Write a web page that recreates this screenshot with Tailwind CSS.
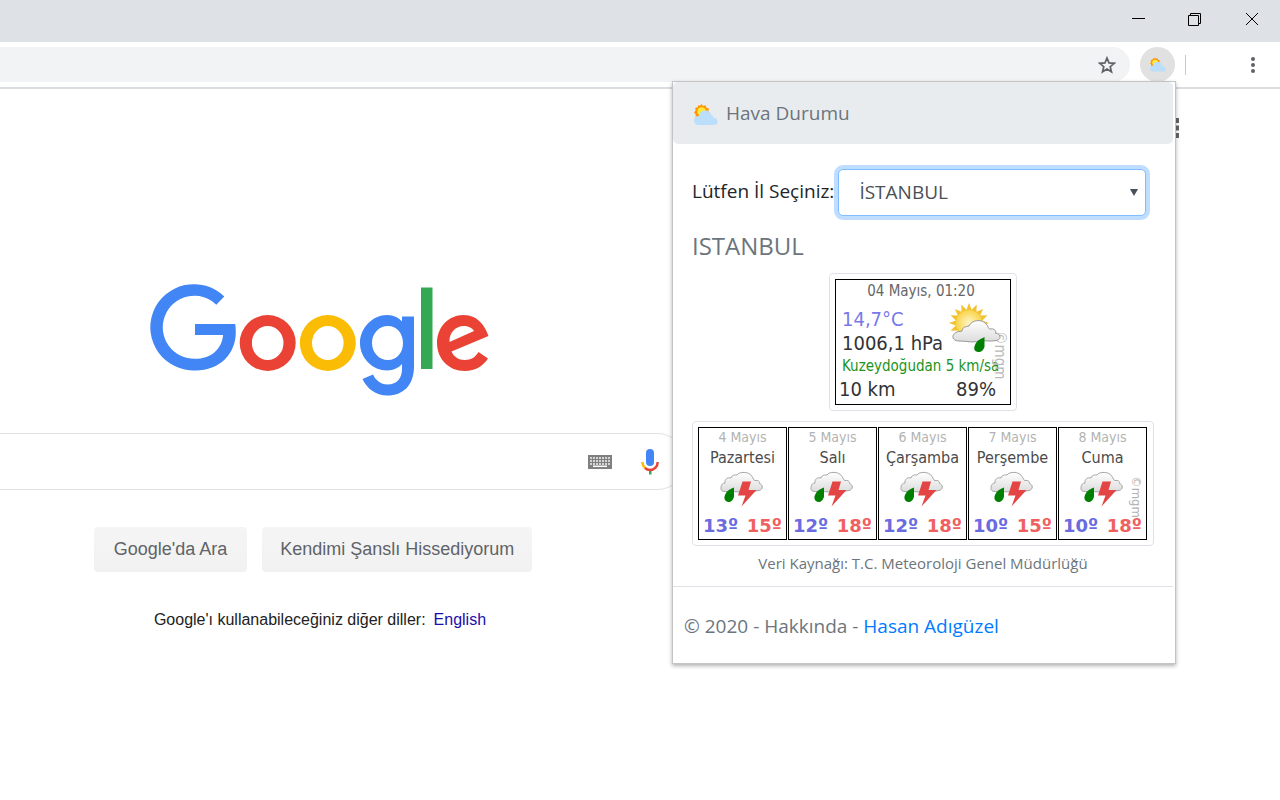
<!DOCTYPE html>
<html lang="tr">
<head>
<meta charset="utf-8">
<title>Hava Durumu</title>
<script src="https://cdn.jsdelivr.net/npm/@tailwindcss/browser@4"></script>
</head>
<body class="flex min-h-screen flex-col bg-white font-['Liberation_Sans',sans-serif] text-base text-[#222]">

<svg class="absolute size-0" aria-hidden="true">
  <defs>
    <linearGradient id="cloudFill" x1="0" y1="0" x2="0" y2="1"><stop offset="0" stop-color="#fff"/><stop offset="1" stop-color="#dcdcdc"/></linearGradient>
    <radialGradient id="sunFill"><stop offset="0" stop-color="#fff6c8"/><stop offset="1" stop-color="#f9d44c"/></radialGradient>
  </defs>
  <symbol id="partly" viewBox="0 0 24 21">
    <path fill="#ff9800" d="M7.500 0L9.200 2L11.700 1.300L12.400 3.800L15 4.400L14.300 6.900L15.500 8.500L12 14L5 14L1.500 12.500L1.700 10.500L0 8.500L1.700 6.300L1.100 3.900L3.600 3.300L4.600 1L6 1.800Z"/>
    <circle cx="7.700" cy="7.600" r="4.300" fill="#ffeb3b"/>
    <path fill="#bbdefb" d="M4.500 21a4.500 4.500 0 0 1 0-9h.5a6.300 6.300 0 0 1 12.300-1a4.500 4.500 0 0 1 2.700 3a3.500 3.500 0 0 1 0 7z"/>
  </symbol>
  <symbol id="storm" viewBox="0 0 44 36">
    <path fill="url(#cloudFill)" stroke="#a5a5a5" d="M7 20.500C2 21 .500 19 1 16.500C1 13.500 3 12 5 12C4.500 8 7.500 6 11 7C12 3.500 15 4 17 4C19 .500 29 0 32 5.500C34 8 33.500 9.500 35 9.500C38 9 40 10.500 39.500 12.500C43 13.500 43.500 18.500 39 19.500C33 21.500 27 19 22 20.500C17 21.500 12 20 7 20.500Z"/>
    <path fill="#008000" d="M14 16.500V25.500C13 29.500 11 31 8.500 31C5 31 3.500 27 5 24C6.500 20 10 18 14 16.500Z"/>
    <path fill="#e34444" d="M22.500 10.500H31L28.500 19H36.500L21.500 35.500L25.500 24.500H18Z"/>
  </symbol>
</svg>

<header>
  <div class="flex h-[42px] justify-end bg-[#dee1e6] text-black">
    <button class="grid w-14 place-items-center pb-1" aria-label="Simge durumuna küçült"><svg class="size-3.5" viewBox="0 0 14 14"><path d="M1 6.500h13" stroke="currentColor" shape-rendering="crispEdges"/></svg></button>
    <button class="grid w-14 place-items-center pb-1" aria-label="Önceki boyut"><svg class="size-3.5" viewBox="0 0 14 14" fill="none" stroke="currentColor"><path d="M1.500 3.500h10v10h-10zM3.500 3.500v-2h10v10h-2"/></svg></button>
    <button class="ml-0.5 grid w-14 place-items-center pb-1" aria-label="Kapat"><svg class="size-3.5" viewBox="0 0 14 14"><path d="M1 1l12 12M13 1L1 13" stroke="currentColor"/></svg></button>
  </div>
  <div class="flex h-[47px] items-center border-b-2 border-[#dadce0] pr-6">
    <div class="flex h-[35px] flex-1 items-center justify-end rounded-r-full bg-[#f1f3f4] pr-3.5">
      <button aria-label="Yer işareti ekle"><svg class="size-[18px]" viewBox="0 0 18 18" fill="none" stroke="#5f6368" stroke-width="1.700"><path d="M9 2l2 4.900 5.200.4-4 3.400 1.300 5.100L9 13l-4.500 2.800 1.300-5.100-4-3.400L7 6.900z"/></svg></button>
    </div>
    <button class="ml-2.5 grid size-[35px] place-items-center rounded-full bg-[#e1e1e1]" aria-label="Hava Durumu eklentisi"><svg class="h-[15px] w-4"><use href="#partly"/></svg></button>
    <div class="ml-2.5 h-5 w-px bg-[#c8cacd]"></div>
    <button class="ml-16 grid h-6 w-1.5 place-items-center" aria-label="Menü"><svg class="h-4 w-1" viewBox="0 0 4 16" fill="#5f6368"><circle cx="2" cy="2" r="2"/><circle cx="2" cy="8" r="2"/><circle cx="2" cy="14" r="2"/></svg></button>
  </div>
</header>

<main class="relative flex-1">
  <button class="absolute top-[29px] right-[101px]" aria-label="Google uygulamaları"><svg class="size-5" viewBox="0 0 20 20" fill="#666"><path d="M0 0h5v5H0zM7.500 0h5v5h-5zM15 0h5v5h-5zM0 7.500h5v5H0zM7.500 7.500h5v5h-5zM15 7.500h5v5h-5zM0 15h5v5H0zM7.500 15h5v5h-5zM15 15h5v5h-5z"/></svg></button>

  <div class="flex w-1/2 flex-col items-center pt-[194px]">
    <svg class="h-[114px] w-[340px]" viewBox="150 283 340 114" fill="none" role="img" aria-label="Google">
      <path fill="#4285f4" d="M195 324h40.200q.6 4 .6 8c0 22-16 38.500-40.300 38.500a43.500 43.200 0 1 1 28.800-74l-8 8.300a31.500 31.500 0 1 0-21 54c15 0 26.500-9 27.800-23.800H195z"/>
      <path fill="#ea4335" fill-rule="evenodd" d="M267.700 315a28 28 0 1 1 0 56a28 28 0 1 1 0-56zm0 11a15.800 17 0 1 0 0 34a15.800 17 0 1 0 0-34z"/>
      <path fill="#fbbc05" fill-rule="evenodd" d="M327.800 315a28 28 0 1 1 0 56a28 28 0 1 1 0-56zm0 11a15.800 17 0 1 0 0 34a15.800 17 0 1 0 0-34z"/>
      <path fill="#4285f4" fill-rule="evenodd" d="M402 316.500h12v50c0 19-11 29-26.500 29c-12 0-20.500-7-25-16.500l10.500-4.500c2.500 5.500 7.500 10 14.500 10c10 0 14.500-6.500 14.500-16v-4.500c-3 3.500-8 6.500-15 6.500c-14 0-27-12-27-27.500s13-28 27-28c7 0 12 3 15 6.500zm-14 9.500c-9 0-16 7.500-16 17s7 17 16 17c8.500 0 15-7 15-17s-6.500-17-15-17z"/>
      <path fill="#34a853" d="M421 287.500h11.500V369H421z"/>
      <path fill="#ea4335" fill-rule="evenodd" d="M488.500 336l-37 15.500c2.500 5.500 7 8.500 13 8.500c7 0 11-3 14-8l9.500 6.500c-5 7.500-12 12.500-23.500 12.500c-15.500 0-27.500-12-27.500-28s11.500-28 26.500-28c15 0 22 12 25 21zm-14.500-5c-2-3.500-6-5-10.500-5c-7.500 0-14.500 6.500-14 16z"/>
    </svg>
    <form class="mt-9 -mr-[46px] flex h-[57px] items-center gap-7 self-stretch rounded-r-full border border-l-0 border-[#dfe1e5] pr-[25px]">
      <input class="h-full min-w-0 flex-1 outline-none" type="text" aria-label="Ara">
      <button type="button" aria-label="Giriş araçları"><svg class="h-3.5 w-6" viewBox="0 0 24 14"><path fill="#7f7f7f" d="M0 0h24v14H0z"/><path stroke="#d4d4d4" stroke-width="2" stroke-dasharray="2 1" d="M2 3h20M2 6h20M2 9h20"/><path stroke="#fff" stroke-width="1.500" d="M5 11.300h14"/></svg></button>
      <button type="button" aria-label="Sesle arama"><svg class="h-[26px] w-[20px]" viewBox="0 0 20 26" fill="none"><rect x="6" width="8" height="17" rx="4" fill="#4285f4"/><path fill="#34a853" d="M9 21h2.500v4.500H9z"/><path stroke="#fbbc05" stroke-width="2.500" d="M2.300 13q.2 3.500 2.700 6"/><path stroke="#ea4335" stroke-width="2.500" d="M5 19q2.200 2 5 2c4.500 0 7.600-3.500 7.700-8"/></svg></button>
    </form>
    <div class="mt-[37px] flex gap-[15px] pr-3.5 text-lg text-[#5f6368]">
      <button class="h-[45px] rounded bg-linear-to-b from-[#f5f5f5] to-[#f1f1f1] px-5 pb-0.5">Google'da Ara</button>
      <button class="h-[45px] rounded bg-linear-to-b from-[#f5f5f5] to-[#f1f1f1] px-[18px] pb-0.5">Kendimi Şanslı Hissediyorum</button>
    </div>
    <p class="mt-9 flex gap-2 text-base">Google'ı kullanabileceğiniz diğer diller: <a class="text-[#1a0dab]" href="#en">English</a></p>
  </div>
</main>

<section class="absolute top-[81px] right-[104px] w-[504px] border border-[#c4c4c4] bg-white font-['Open_Sans',sans-serif] text-[19px] text-[#6c757d] shadow-[0_2px_4px_rgb(0_0_0/0.3)]" aria-label="Hava Durumu">
  <h1 class="mr-0.5 flex h-[62px] items-center gap-2 rounded-[5px] bg-[#e9ecef] pl-[21px]"><svg class="mt-0.5 h-[21px] w-6"><use href="#partly"/></svg>Hava Durumu</h1>
  <div class="mr-0.5 border-b border-[#dee2e6] px-[19px] pt-[25px] pb-2.5">
    <div class="flex items-center gap-1 pr-2">
      <label for="city" class="pb-0.5 whitespace-nowrap text-[#212529]">Lütfen İl Seçiniz:</label>
      <div class="relative flex-1">
        <select id="city" class="h-[47px] w-full appearance-none rounded-[5px] border border-[#80bdff] bg-white px-5 text-[19px] text-[#495057] ring-4 ring-[#bfdeff] outline-none"><option>İSTANBUL</option></select>
        <svg class="pointer-events-none absolute top-5 right-2 h-[7px] w-2" viewBox="0 0 8 7" fill="#495057"><path d="M0 0h8L4 7z"/></svg>
      </div>
    </div>
    <h2 class="mt-3 text-2xl leading-9">ISTANBUL</h2>
    <div class="mx-auto mt-[9px] w-[188px] rounded border border-[#dee2e6] p-[5px]">
      <div class="relative h-[126px] overflow-hidden border border-black font-['DejaVu_Sans_Condensed','DejaVu_Sans',sans-serif] text-xl leading-6 whitespace-nowrap text-[#333]">
        <p class="pr-1 text-center text-[15px] leading-[22px] text-[#666]">04 Mayıs, 01:20</p>
        <p class="mt-[5px] pl-1.5 text-[#7878e8]">14,7°C</p>
        <p class="pl-1.5">1006,1 hPa</p>
        <p class="pl-1.5 text-[15px] leading-[22px] text-[#1c931c]">Kuzeydoğudan 5 km/sa</p>
        <p class="flex justify-between pr-3.5 pl-[3px]"><span>10 km</span><span>89%</span></p>
        <span class="absolute top-[51px] right-0.5 text-[15px] leading-4 text-[#bbb] [text-orientation:sideways] [writing-mode:vertical-rl]">©mgm</span>
        <svg class="absolute top-[23px] right-[5px] h-[50px] w-[56px]" viewBox="0 0 56 50">
          <path fill="#f2c230" d="M40 20L33.200 22.600L38.500 27.700L31.200 27.500L34.100 34.100L27.500 31.200L27.700 38.500L22.600 33.200L20 40L17.400 33.200L12.300 38.500L12.500 31.200L5.900 34.100L8.800 27.500L1.500 27.700L6.800 22.600L0 20L6.800 17.400L1.500 12.300L8.800 12.500L5.900 5.900L12.500 8.800L12.300 1.500L17.400 6.800L20 0L22.600 6.800L27.700 1.500L27.500 8.800L34.100 5.900L31.200 12.500L38.500 12.300L33.200 17.400Z"/>
          <circle cx="20" cy="20" r="13" fill="url(#sunFill)"/>
          <path fill="url(#cloudFill)" stroke="#999" d="M10 38C3 38 2 32 7 29.500C9 28 10 29 13 28C14 23 17 24 20 23C22 17 34 15 38 22C40 24 38 26 42 26C46 25 48 30 46 30C52 30 53 37 47 37.500C40 39 36 37 30 38C23 40 18 38 10 38Z"/>
          <path fill="#008000" d="M35.500 34V44C34 48 32 49 29.500 49C25 49 24.500 45 26 42C28 37 32 36 35.500 34Z"/>
        </svg>
      </div>
    </div>
    <ul class="mt-2.5 grid grid-cols-5 gap-px rounded border border-[#dee2e6] p-[5px] pr-1.5 font-['DejaVu_Sans_Condensed','DejaVu_Sans',sans-serif] whitespace-nowrap">
      <li class="flex h-[113px] flex-col items-center border border-black"><span class="text-sm leading-[18px] text-[#b3b3b3]">4 Mayıs</span><span class="text-base leading-[23px] text-[#4a4a4a]">Pazartesi</span><svg class="mt-0.5 mr-0.5 h-9 w-11"><use href="#storm"/></svg><b class="mt-1.5 flex w-full justify-between px-1 font-['DejaVu_Sans',sans-serif] text-lg leading-[26px]"><span class="text-[#6b6be0]">13º</span><span class="text-[#f06060]">15º</span></b></li>
      <li class="flex h-[113px] flex-col items-center border border-black"><span class="text-sm leading-[18px] text-[#b3b3b3]">5 Mayıs</span><span class="text-base leading-[23px] text-[#4a4a4a]">Salı</span><svg class="mt-0.5 mr-0.5 h-9 w-11"><use href="#storm"/></svg><b class="mt-1.5 flex w-full justify-between px-1 font-['DejaVu_Sans',sans-serif] text-lg leading-[26px]"><span class="text-[#6b6be0]">12º</span><span class="text-[#f06060]">18º</span></b></li>
      <li class="flex h-[113px] flex-col items-center border border-black"><span class="text-sm leading-[18px] text-[#b3b3b3]">6 Mayıs</span><span class="text-base leading-[23px] text-[#4a4a4a]">Çarşamba</span><svg class="mt-0.5 mr-0.5 h-9 w-11"><use href="#storm"/></svg><b class="mt-1.5 flex w-full justify-between px-1 font-['DejaVu_Sans',sans-serif] text-lg leading-[26px]"><span class="text-[#6b6be0]">12º</span><span class="text-[#f06060]">18º</span></b></li>
      <li class="flex h-[113px] flex-col items-center border border-black"><span class="text-sm leading-[18px] text-[#b3b3b3]">7 Mayıs</span><span class="text-base leading-[23px] text-[#4a4a4a]">Perşembe</span><svg class="mt-0.5 mr-0.5 h-9 w-11"><use href="#storm"/></svg><b class="mt-1.5 flex w-full justify-between px-1 font-['DejaVu_Sans',sans-serif] text-lg leading-[26px]"><span class="text-[#6b6be0]">10º</span><span class="text-[#f06060]">15º</span></b></li>
      <li class="relative flex h-[113px] flex-col items-center border border-black"><span class="text-sm leading-[18px] text-[#b3b3b3]">8 Mayıs</span><span class="text-base leading-[23px] text-[#4a4a4a]">Cuma</span><svg class="mt-0.5 mr-0.5 h-9 w-11"><use href="#storm"/></svg><b class="mt-1.5 flex w-full justify-between px-1 font-['DejaVu_Sans',sans-serif] text-lg leading-[26px]"><span class="text-[#6b6be0]">10º</span><span class="text-[#f06060]">18º</span></b><span class="absolute top-12 right-0.5 text-[13px] leading-4 text-[#b3b3b3] [text-orientation:sideways] [writing-mode:vertical-rl]">©mgm</span></li>
    </ul>
    <p class="mt-[5px] pb-px text-center text-[15px] leading-6">Veri Kaynağı: T.C. Meteoroloji Genel Müdürlüğü</p>
  </div>
  <footer class="px-[11px] pt-6 pb-[22px] leading-[30px]">© 2020 - Hakkında - <a class="text-[#007bff]" href="#hasan">Hasan Adıgüzel</a></footer>
</section>
</body>
</html>
